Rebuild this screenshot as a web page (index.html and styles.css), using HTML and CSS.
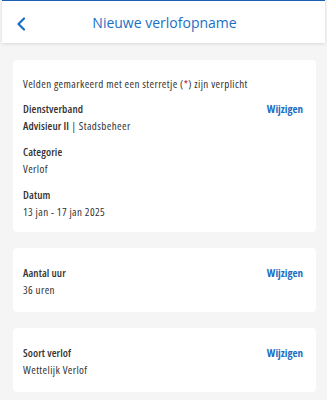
FILE: index.html
```html
<!DOCTYPE html>
<html lang="nl">
<head>
    <meta charset="UTF-8">
    <meta name="viewport" content="width=device-width, initial-scale=1.0">
    <title>Nieuwe verlofopname</title>
    <link rel="stylesheet" href="styles.css">
</head>
<body>
    <header class="topbar">
        <button class="back" aria-label="Terug">
            <svg width="10" height="14" viewBox="0 0 10 14">
                <path d="M8 1.5 L2.5 7 L8 12.5" fill="none" stroke="#1a6fc4" stroke-width="2.2" stroke-linecap="round" stroke-linejoin="round"/>
            </svg>
        </button>
        <h1>Nieuwe verlofopname</h1>
    </header>

    <main class="content">
        <!-- Dienstverband, categorie en datum -->
        <section class="card first">
            <p class="note">Velden gemarkeerd met een sterretje (<span class="req">*</span>) zijn verplicht</p>
            <div class="field">
                <div class="field-head">
                    <span class="label">Dienstverband</span>
                    <a class="edit" href="#">Wijzigen</a>
                </div>
                <div class="value"><b>Advisieur II</b> | Stadsbeheer</div>
            </div>
            <div class="field">
                <div class="field-head"><span class="label">Categorie</span></div>
                <div class="value">Verlof</div>
            </div>
            <div class="field">
                <div class="field-head"><span class="label">Datum</span></div>
                <div class="value">13 jan - 17 jan 2025</div>
            </div>
        </section>

        <section class="card">
            <div class="field">
                <div class="field-head">
                    <span class="label">Aantal uur</span>
                    <a class="edit" href="#">Wijzigen</a>
                </div>
                <div class="value">36 uren</div>
            </div>
        </section>

        <section class="card">
            <div class="field">
                <div class="field-head">
                    <span class="label">Soort verlof</span>
                    <a class="edit" href="#">Wijzigen</a>
                </div>
                <div class="value">Wettelijk Verlof</div>
            </div>
        </section>
    </main>
</body>
</html>
```

FILE: styles.css
```css
body {
    font-family: "Open Sans", sans-serif;
    font-stretch: 75%;
    letter-spacing: 0.4px;
    margin: 0;
    padding: 0;
    background-color: #f5f5f5;
    color: #333;
    font-size: 11px;
}
.topbar {
    position: relative;
    height: 42px;
    background-color: #fff;
    border-top: 1px solid #1a5fb4;
    margin: 0 2px;
    box-shadow: 0 1px 3px rgba(0, 0, 0, 0.12);
    display: flex;
    align-items: center;
    justify-content: center;
}
.topbar h1 {
    margin: 0 0 0 2px;
    font-size: 14px;
    font-stretch: 100%;
    letter-spacing: 0;
    font-weight: 400;
    color: #1a6fc4;
}
.back {
    position: absolute;
    left: 14px;
    top: 16px;
    padding: 0;
    border: none;
    background: none;
    line-height: 0;
}
.content {
    padding: 17px 11px 0 13px;
}
.card {
    background-color: #fff;
    border-radius: 4px;
    padding: 16px 13px 14px 10px;
    margin-bottom: 16px;
}
.card.first {
    padding-top: 15px;
    padding-bottom: 12px;
}
.note {
    margin: 0 0 8px;
    line-height: 17px;
}
.req {
    color: #d0021b;
}
.field {
    margin-bottom: 9px;
}
.field:last-child {
    margin-bottom: 0;
}
.field-head {
    display: flex;
    justify-content: space-between;
    align-items: baseline;
    line-height: 17px;
}
.label {
    font-weight: 600;
    letter-spacing: 0.1px;
}
.edit {
    color: #1a6fc4;
    font-weight: 700;
    letter-spacing: 0;
    text-decoration: none;
}
.value {
    line-height: 17px;
}
.value b {
    font-weight: 600;
    letter-spacing: 0.1px;
}
```
